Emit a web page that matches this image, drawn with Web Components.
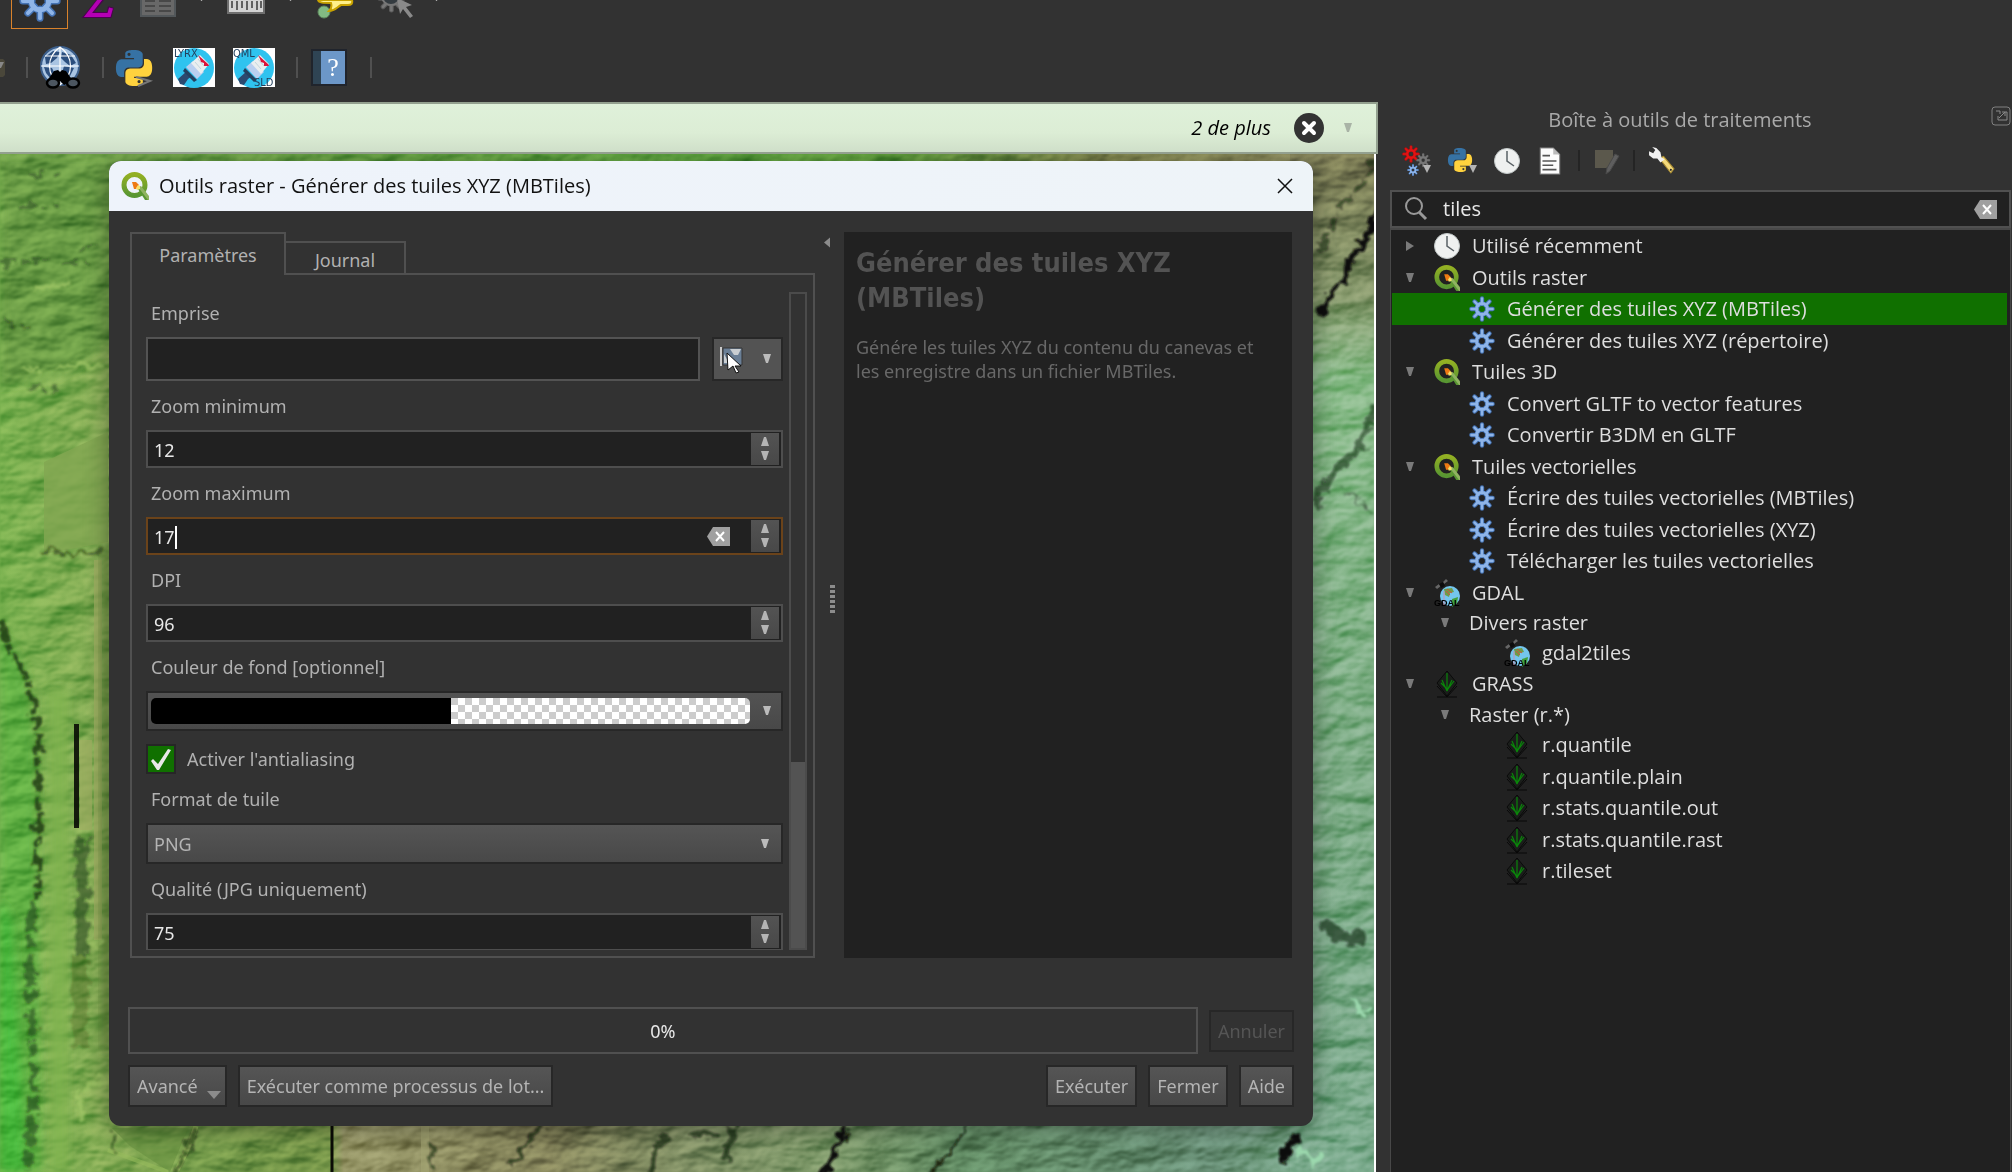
<!DOCTYPE html>
<html lang="fr">
<head>
<meta charset="utf-8">
<meta name="viewport" content="width=device-width, initial-scale=1">
<title>QGIS - Générer des tuiles XYZ (MBTiles)</title>
<style>
  html, body {
    height: 100%;
    margin: 0;
    overflow: hidden;
    background: #323232;
  }
</style>
</head>
<body>
<qgis-app></qgis-app>

<script>
// ---------- icons ----------

// ring with eight rounded teeth
const gear = (light, dark) => {
  const spokes = [0, 45, 90, 135, 180, 225, 270, 315]
    .map((a) => `<path d="M12 7.5V2.2" transform="rotate(${a} 12 12)"/>`)
    .join("");
  return `
    <g fill="none" stroke-linecap="round">
      <g stroke="${dark}" stroke-width="4">${spokes}<circle cx="12" cy="12" r="5"/></g>
      <g stroke="${light}" stroke-width="2.2">${spokes}<circle cx="12" cy="12" r="5" stroke-width="2.8"/></g>
    </g>`;
};

const python = `
  <path fill="#3672a4" d="M14.25.18l.9.2.73.26.59.3.45.32.34.34.25.34.16.33.1.3.04.26.02.2-.01.13V8.5l-.05.63-.13.55-.21.46-.26.38-.3.31-.33.25-.35.19-.35.14-.33.1-.3.07-.26.04-.21.02H8.77l-.69.05-.59.14-.5.22-.41.27-.33.32-.27.35-.2.36-.15.37-.1.35-.07.32-.04.27-.02.21v3.06H3.17l-.21-.03-.28-.07-.32-.12-.35-.18-.36-.26-.36-.36-.35-.46-.32-.59-.28-.73-.21-.88-.14-1.05-.05-1.23.06-1.22.16-1.04.24-.87.32-.71.36-.57.4-.44.42-.33.42-.24.4-.16.36-.1.32-.05.24-.01h.16l.06.01h8.16v-.83H6.18l-.01-2.75-.02-.37.05-.34.11-.31.17-.28.25-.26.31-.23.38-.2.44-.18.51-.15.58-.12.64-.1.71-.06.77-.04.84-.02 1.27.05zm-6.3 1.98l-.23.33-.08.41.08.41.23.34.33.22.41.09.41-.09.33-.22.23-.34.08-.41-.08-.41-.23-.33-.33-.22-.41-.09-.41.09z"/>
  <path fill="#ffd23e" d="M21.1 6.11l.28.06.32.12.35.18.36.27.36.35.35.47.32.59.28.73.21.88.14 1.04.05 1.23-.06 1.23-.16 1.04-.24.86-.32.71-.36.57-.4.45-.42.33-.42.24-.4.16-.36.09-.32.05-.24.02-.16-.01h-8.22v.82h5.84l.01 2.76.02.36-.05.34-.11.31-.17.29-.25.25-.31.24-.38.2-.44.17-.51.15-.58.13-.64.09-.71.07-.77.04-.84.01-1.27-.04-1.07-.14-.9-.2-.73-.25-.59-.3-.45-.33-.34-.34-.25-.34-.16-.33-.1-.3-.04-.25-.02-.2.01-.13v-5.34l.05-.64.13-.54.21-.46.26-.38.3-.32.33-.24.35-.2.35-.14.33-.1.3-.06.26-.04.21-.02.13-.01h5.84l.69-.05.59-.14.5-.21.41-.28.33-.32.27-.35.2-.36.15-.36.1-.35.07-.32.04-.28.02-.21V6.07h2.09l.14.01zm-6.47 14.25l-.23.33-.08.41.08.41.23.33.33.23.41.08.41-.08.33-.23.23-.33.08-.41-.08-.41-.23-.33-.33-.23-.41-.08-.41.08z"/>`;

const brush = `
  <rect width="42" height="39" fill="#fff"/>
  <circle cx="21" cy="20" r="20" fill="#2fc3ef"/>
  <path d="M5 31l9-8 5 5-4 3-4 6-4-1z" fill="#2b4a70"/>
  <path d="M12 20l12 12-3 2L10 23z" fill="#24405f"/>
  <path d="M13 19l7-6 11 11-7 7z" fill="#b9cff0"/>
  <path d="M18 15l9-8 9 9-8 10z" fill="#e9eef0"/>
  <path d="M22 14l6 7M25 11l6 7" stroke="#c3d6dc"/>
  <path d="M25 7l10 9 1 2-5 0 0-3-3-1-1-3z" fill="#dc143c"/>`;

const label = (x, y, text) =>
  `<text x="${x}" y="${y}" font-family="DejaVu Sans Condensed, sans-serif" font-size="11" fill="#23405e">${text}</text>`;

const ICONS = {
  gear: ["0 0 24 24", gear("#8fb5e8", "#4573b4")],
  sigma: ["0 0 30 50", `<path d="M2 0h25v8M20 18L3 39h21l2-8" fill="none" stroke="#4b0050" stroke-width="6"/><path d="M20 17L3 39h21l2-7" fill="none" stroke="#b400b4" stroke-width="4"/>`],
  table: ["0 0 50 50", `<path d="M9 0h34v40H9z" fill="#686868" stroke="#52575a" stroke-width="2"/><path d="M13 25h10M27 25h12M13 30h10M27 30h12M13 35h10M27 35h12" stroke="#484848" stroke-width="2"/>`],
  ruler: ["0 0 50 50", `<path d="M7 0h36v37H7z" fill="#d3d3d3" stroke="#6f6f6f" stroke-width="2"/><path d="M11 25v7M16 25v9M21 25v7M26 25v9M31 25v7M36 25v9M40 25v7" stroke="#606060" stroke-width="2"/>`],
  callout: ["0 0 50 50", `<circle cx="14" cy="36" r="6" fill="#83ba83" stroke="#5f8a60"/><path d="M8 24h34c1 4-1 5-4 5h-7c-4 2-6 6-12 6 3-3 3-5 2-8-8 0-12 0-13-3z" fill="#fff08a" stroke="#c8a200" stroke-width="2"/>`],
  gearCursor: ["0 0 40 50", `<g transform="translate(0 8) scale(1.2)">${gear("#777", "#5a5a5a")}</g><circle cx="14" cy="20" r="9" fill="#343b40" stroke="#777" stroke-width="2"/><path d="M20 22l15 7-6 2 7 9-3 2-7-9-3 5z" fill="#8a8a8a"/>`],
  stub: ["0 0 5 18", `<path d="M0 0h3l2 2v14l-2 2H0z" fill="#4a473a"/><path d="M0 3h4L1 9H0z" fill="#888"/>`],
  globe: ["0 0 42 42", `
    <circle cx="21" cy="19" r="19" fill="#a9c4e2" stroke="#3c5f8c" stroke-width="2"/>
    <path d="M6 10l8-6 7 1-3 6-6 5-5 1zM23 5l9 3 5 8-6 3-5-4-4-4zM5 20l8 1 3 6-4 5-5-6zM25 19l10 2-4 8-8-3z" fill="#2c4f7e"/>
    <path d="M2 19h38M6 9h30M21 0v38M21 0c-14 10-14 28 0 38M21 0c14 10 14 28 0 38" fill="none" stroke="#fff" stroke-width="1.2"/>
    <path d="M8 34l7-10 4-1 2 2 2-2 4 1 7 10-9 4-4-4-4 4z" fill="#000"/>
    <ellipse cx="14" cy="36" rx="6" ry="4.500" fill="#4c5660" stroke="#000" stroke-width="2.500"/>
    <ellipse cx="34" cy="36" rx="6" ry="4.500" fill="#4c5660" stroke="#000" stroke-width="2.500"/>`],
  pythonConsole: ["0 0 40 40", `<g transform="translate(1 2) scale(1.5)">${python}</g><path d="M21 29l14 4-12 5" fill="none" stroke="#777" stroke-width="2"/>`],
  lyrx: ["0 0 42 39", brush + label(1, 9, "LYRX")],
  qmlSld: ["0 0 42 39", brush + label(0, 9, "QML") + label(21, 38, "SLD")],
  book: ["0 0 36 37", `<path d="M1 1h34v35H1z" fill="#6c97c8" stroke="#20242c" stroke-width="2"/><path d="M2 2h8v33H2z" fill="#2f4454"/><text x="22" y="27" text-anchor="middle" font-family="Liberation Serif, serif" font-size="26" fill="#fff">?</text>`],
  closeRound: ["0 0 30 30", `<circle cx="15" cy="15" r="15" fill="#333"/><path d="M10 10l10 10M20 10L10 20" stroke="#fff" stroke-width="4" stroke-linecap="round"/>`],
  gears: ["0 0 31 31", `<g transform="scale(.75)">${gear("#e01515", "#b80d0d")}<circle cx="12" cy="12" r="3" fill="#323232"/></g><g transform="translate(14 8) scale(.6)">${gear("#777", "#5c5c5c")}</g><g transform="translate(5 19) scale(.5)">${gear("#8fb5e8", "#4573b4")}</g><path d="M21 20h8l-4 8z" fill="#b4b4b4"/>`],
  pythonMenu: ["0 0 33 31", `<g transform="translate(2 3)">${python}</g><path d="M23 20h8l-4 8z" fill="#b4b4b4"/>`],
  clock: ["0 0 26 26", `<circle cx="13" cy="13" r="12.500" fill="#eff1f0" stroke="#c2c8c8"/><path d="M13 3v10l7 5" fill="none" stroke="#5a6266" stroke-width="1.500"/>`],
  doc: ["0 0 26 26", `<path d="M4 1h12l6 6v18H4z" fill="#fcfcfc" stroke="#888"/><path d="M16 1v6h6z" fill="#bbb"/><path d="M6 8h7M6 13h13M6 17h10M6 21h13" stroke="#555" stroke-width="1.500"/>`],
  edit: ["0 0 27 26", `<path d="M2 2h18v15L13 20H2z" fill="#5b584c"/><path d="M22 6l4 2-9 15-4 3 1-6z" fill="#5e5e5e" stroke="#494949"/>`],
  wrench: ["0 0 26 26", `<path d="M11 11l4-2 10 12-3 4z" fill="#f4da7c" stroke="#a98c32"/><path d="M4 0l4 1 4 4 1 5 3 2-4 3-3-4-4 0-4-3 0-4 4 2 2-3z" fill="#f0f0f0"/><circle cx="22" cy="22" r="1" fill="#222"/>`],
  search: ["0 0 24 24", `<circle cx="10" cy="9" r="8" fill="none" stroke="#999" stroke-width="2"/><path d="M15 15l7 7" stroke="#999" stroke-width="3"/>`],
  clear: ["0 0 23 19", `<path d="M0 9.500L6 0h17v19H6z" fill="#a0a0a0"/><path d="M9 5l8 9M17 5l-8 9" stroke="#fff" stroke-width="2"/>`],
  float: ["0 0 20 20", `<rect x="1" y="1" width="18" height="18" rx="3" fill="none" stroke="#808080"/><path d="M5 5h4v3M14 6h2v8h-9v-4M8 12l6-6M11 6h3v4" fill="none" stroke="#8a8a8a"/>`],
  qgis: ["0 0 28 28", `
    <defs><linearGradient id="q" x1="0" y1="0" x2="0" y2="1"><stop offset="0" stop-color="#93b023"/><stop offset="1" stop-color="#589632"/></linearGradient></defs>
    <circle cx="13.500" cy="13" r="10.500" fill="none" stroke="url(#q)" stroke-width="5"/>
    <path d="M17 17l4-2 6 9v4h-3z" fill="#589632"/>
    <path d="M17 15l3-1 8 10v4h-1z" fill="#8fb361"/>
    <path d="M11 10h4l3 3-3 4h-2z" fill="#ee7913"/><path d="M17 13l2 1 0 3-3 1-1-2z" fill="#f8e06a"/>`],
  gdal: ["0 0 26 28", `
    <path d="M1 8l4-3 2 2-4 3zM9 3l3-3 2 2-4 3z" fill="#666"/><path d="M5 5l4-2 2 4-4 2z" fill="#0c0c0c"/>
    <circle cx="16" cy="17" r="10" fill="#74c6ee"/>
    <path d="M10 10l8-1 2 4-4 1-1 4-4-2z" fill="#6f9c4a"/><path d="M12 12l4 4M13 10l5 4" stroke="#d34e3a"/>
    <path d="M18 20l6-2-1 6-5 4z" fill="#3f9f3c"/><path d="M10 12v15" stroke="#c78fae"/>
    <text x="0" y="27" font-family="Liberation Sans, sans-serif" font-weight="700" font-size="9" fill="#000">GDAL</text>`],
  grass: ["0 0 26 28", `
    <path d="M13 1l10 12-10 13L3 13z" fill="#1a1d1a" stroke="#0a0a0a"/><path d="M3 16l10 11 10-11M3 27h20" fill="none" stroke="#080808"/>
    <path d="M13 21V3M13 21L8 10M13 21l5-11M12 18l-5-5M14 19l6-8" fill="none" stroke="#0a860a" stroke-width="1.200"/>`],
  extent: ["0 0 24 28", `<path d="M1 2v19" stroke="#ccc" stroke-width="2"/><path d="M3 3h19v17H3z" fill="#6a7f96" stroke="#343434"/><path d="M10 4h11l-3 6h-4zM4 9l5 9H4z" fill="#c9ced2"/><path d="M7 8l14 13-6 0 4 6-3 1-3-7-5 4z" fill="#fff" stroke="#111"/>`],
  close: ["0 0 16 16", `<path d="M1 1l14 14M15 1L1 15" stroke="#111" stroke-width="1.500"/>`],
  down: ["0 0 10 10", `<path d="M1 0h8L6 9H4z" fill="currentColor"/>`],
  up: ["0 0 10 10", `<path d="M1 9h8L6 0H4z" fill="currentColor"/>`],
  right: ["0 0 10 10", `<path d="M1 0v10l8-5z" fill="currentColor"/>`],
  left: ["0 0 10 10", `<path d="M8 0v10L2 5z" fill="currentColor"/>`],
  menu: ["0 0 14 8", `<path d="M0 0h14L7 8z" fill="currentColor"/>`],
};

const icon = (name, width, height = width) =>
  `<svg width="${width}" height="${height}" viewBox="${ICONS[name][0]}" aria-hidden="true">${ICONS[name][1]}</svg>`;

// rules that every shadow root starts with
const base = `
  *, *::before, *::after { box-sizing: border-box; }
  svg { display: block; flex: none; overflow: visible; }
  button, input, select { margin: 0; font: inherit; color: inherit; border-radius: 0; outline: none; }
  .tool { padding: 0; border: 0; background: none; }
`;

class BaseElement extends HTMLElement {
  connectedCallback() {
    if (this.shadowRoot) return;
    this.attachShadow({ mode: "open" });
    this.shadowRoot.innerHTML = `<style>${base}</style>${this.template()}`;
  }
}

// ---------- main tool bars ----------

class MainToolbar extends BaseElement {
  template() {
    const tool = (name, title, w, h = w) => `<button class="tool" type="button" aria-label="${title}">${icon(name, w, h)}</button>`;
    return `
      <style>
        :host { display: flex; flex-direction: column; justify-content: flex-end; height: 102px; overflow: hidden; color: #8c8c8c; }
        .row { display: flex; align-items: center; flex: none; }
        .first { height: 57px; gap: 17px; padding-left: 11px; align-items: flex-start; }
        .first .tool { margin-top: 4px; }
        .first .menu { padding-top: 22px; color: #aaa; width: 5px; }
        .first .active { display: grid; place-items: center; width: 57px; height: 57px; margin: 0; border: 1px solid #d9822b; background: #2d2d2d; }
        .second { height: 73px; padding-top: 4px; }
        .second .tool + .tool { margin-left: 18px; }
        .sep { width: 2px; height: 21px; margin: 0 11px 0 21px; background: #505050; }
      </style>
      <div class="row first">
        <button class="tool active" type="button" aria-label="Boîte à outils">${icon("gear", 42)}</button>
        ${tool("sigma", "Statistiques", 30, 50)}
        ${tool("table", "Table d'attributs", 50)}
        <span class="menu">${icon("down", 5, 10)}</span>
        ${tool("ruler", "Mesurer", 50)}
        <span class="menu">${icon("down", 5, 10)}</span>
        ${tool("callout", "Annotation", 50)}
        ${tool("gearCursor", "Actions", 40, 50)}
        <span class="menu">${icon("down", 5, 10)}</span>
      </div>
      <div class="row second">
        ${icon("stub", 5, 18)}
        <span class="sep"></span>
        ${tool("globe", "MetaSearch", 42)}
        <span class="sep"></span>
        ${tool("pythonConsole", "Console Python", 40)}
        ${tool("lyrx", "LYRX", 42, 39)}
        ${tool("qmlSld", "QML SLD", 42, 39)}
        <span class="sep"></span>
        ${tool("book", "Aide", 40, 37)}
        <span class="sep"></span>
      </div>`;
  }
}
customElements.define("main-toolbar", MainToolbar);

class MessageBar extends BaseElement {
  template() {
    return `
      <style>
        :host {
          display: flex; align-items: center; justify-content: flex-end;
          height: 52px; box-sizing: border-box; padding-right: 23px;
          border: solid #93a08f; border-width: 2px 2px 2px 0;
          background: linear-gradient(#dff1da, #dcedd5 60%, #cfdfc9);
          font: italic 20px/24px "Open Sans", sans-serif; color: #000;
        }
        .tool { margin: 0 19px 0 23px; }
        .menu { color: #a9b3a6; }
      </style>
      <slot></slot>
      <button class="tool" type="button" aria-label="Fermer">${icon("closeRound", 30)}</button>
      <span class="menu">${icon("down", 10)}</span>`;
  }
}
customElements.define("message-bar", MessageBar);

// ---------- hillshade map ----------

class MapCanvas extends BaseElement {
  template() {
    return `
      <style>
        :host { display: block; position: relative; overflow: hidden; min-height: 0; border-right: 2px solid #fff; margin-right: 2px; background: #79a862; }
        svg { width: 100%; height: 100%; }
        .shade { mix-blend-mode: overlay; }
      </style>
      <svg viewBox="0 154 1374 1018" preserveAspectRatio="none" aria-hidden="true">
        <defs>
          <linearGradient id="base">
            <stop offset="0" stop-color="#75ae4c"/><stop offset=".08" stop-color="#84ab54"/>
            <stop offset=".14" stop-color="#749b4a"/>
            <stop offset=".24" stop-color="#78984a"/><stop offset=".25" stop-color="#979767"/>
            <stop offset=".4" stop-color="#84835a"/><stop offset=".5" stop-color="#7d8d62"/>
            <stop offset=".6" stop-color="#7c9868"/><stop offset=".7" stop-color="#628c64"/>
            <stop offset=".88" stop-color="#688f76"/><stop offset="1" stop-color="#7fb490"/>
          </linearGradient>
          <linearGradient id="top"><stop offset="0" stop-color="#72a44a"/><stop offset=".5" stop-color="#5fa840"/><stop offset=".65" stop-color="#62a33e"/><stop offset=".8" stop-color="#848a50"/><stop offset="1" stop-color="#8c8860"/></linearGradient>
          <linearGradient id="right" x1="0" y1="0" x2="0" y2="1"><stop offset="0" stop-color="#7c7b54"/><stop offset=".14" stop-color="#84976a"/><stop offset=".22" stop-color="#86ba86"/><stop offset=".6" stop-color="#7bab84"/><stop offset="1" stop-color="#79a98b"/></linearGradient>
          <filter id="fine" x="0" y="0" width="100%" height="100%" color-interpolation-filters="sRGB">
            <feTurbulence type="fractalNoise" baseFrequency=".02 .045" numOctaves="4" seed="7"/>
            <feColorMatrix values="0 0 0 0 0  0 0 0 0 0  0 0 0 0 0  1 0 0 0 0"/>
            <feDiffuseLighting surfaceScale="7" diffuseConstant=".72" lighting-color="#fff"><feDistantLight azimuth="225" elevation="45"/></feDiffuseLighting>
            <feGaussianBlur stdDeviation=".8"/>
          </filter>
          <filter id="rough" x="-20%" y="-20%" width="140%" height="140%">
            <feTurbulence type="fractalNoise" baseFrequency=".09" numOctaves="3" seed="3"/>
            <feDisplacementMap in="SourceGraphic" scale="18" xChannelSelector="R" yChannelSelector="G"/>
            <feGaussianBlur stdDeviation=".9"/>
          </filter>
          <filter id="soft" x="-50%" y="-50%" width="200%" height="200%"><feGaussianBlur stdDeviation="5"/></filter>
        </defs>
        <rect y="154" width="1374" height="1018" fill="url(#base)"/>
        <rect y="140" width="1374" height="30" fill="url(#top)"/>
        <rect x="1290" y="154" width="84" height="1018" fill="url(#right)"/>
        <path d="M0 154h115v190L60 375 0 385z" fill="#6b9c45" filter="url(#soft)"/>
        <path d="M0 630l24 40 12 80 2 200 4 222H0z" fill="#5fae43" filter="url(#soft)"/>
        <path d="M0 900l12 20 14 252H0z" fill="#4ab93e" filter="url(#soft)"/>
        <rect class="shade" y="154" width="1374" height="1018" filter="url(#fine)" opacity=".6"/>
        <path d="M44 462l64-30v110l-64 12z" fill="#82a651" opacity=".8"/>
        <path d="M48 690h20v482H50z" fill="#80b450" opacity=".8" filter="url(#soft)"/>
        <path d="M80 740h12v90H80zM94 560h8v380h-8z" fill="#a0ae62" opacity=".7"/>
        <path d="M102 550h7v500h-7z" fill="#5f8338" opacity=".8" filter="url(#soft)"/>
        <g fill="none" stroke="#1c3310" filter="url(#rough)">
          <path d="M0 620l12 35 16 25 9 40 2 70 -2 110" stroke-width="6" opacity=".8" stroke-dasharray="22 4 9 5"/>
          <path d="M32 900l-2 60 3 110-4 102" stroke-width="9" opacity=".5" stroke-dasharray="30 6 12 6"/>
          <path d="M0 262h50M20 205h40M64 262h30M0 322l30 4M30 388h30M30 175h30M82 248h22" stroke-width="4" opacity=".45" stroke-dasharray="14 8 6 5"/>
          <path d="M42 553h62" stroke-width="3" opacity=".6"/>
          <path d="M82 836v120" stroke-width="12" opacity=".5"/>
          <path d="M80 956v90" stroke-width="16" opacity=".25"/>
        </g>
        <g fill="none" stroke="#a4c968" filter="url(#rough)">
          <path d="M36 288l34-6M60 366h46M20 370h20M88 945h12M84 1090l20-12M80 1120v-30" stroke-width="5" opacity=".7"/>
        </g>
        <path d="M74 724h5v104h-5z" fill="#080b04" opacity=".9"/>
        <path d="M112 1128h76l-18 44-40-26z" fill="#628b3c" opacity=".5"/>
        <path d="M332 1126v46" stroke="#0b0c06" stroke-width="3"/>
        <path d="M196 1126c-6 20-12 30-20 46" stroke="#97bb5c" stroke-width="5" fill="none" opacity=".8"/>
        <path d="M108 1150l60 22" stroke="#97bb5c" stroke-width="4" opacity=".6"/>
        <path d="M425 1126v46" stroke="#a3a673" stroke-width="8" opacity=".6"/>
        <g fill="none" stroke="#0a0e08" filter="url(#rough)">
          <path d="M115 1130v20M195 1126l-10 30-10 20M432 1145v27" stroke-width="4" opacity=".5"/>
          <path d="M540 1126l-20 30-12 8" stroke-width="5" opacity=".6"/>
          <path d="M652 1172l2-22 16-14M690 1134h25M725 1160l8-34" stroke-width="7" opacity=".6"/>
          <path d="M846 1126l-12 30-14 22" stroke-width="6"/>
          <path d="M966 1126l-14 26-22 24" stroke-width="4" opacity=".8"/>
          <path d="M1284 1164l4-20 14-6" stroke-width="8"/>
          <path d="M1376 210l-10 30-16 18-4 22-18 16-8 20" stroke-width="7"/>
          <path d="M1320 250l22-46 20-20 14-24" stroke-width="6" opacity=".5" stroke-dasharray="16 6"/>
          <path d="M1376 405l-20 46-34 36-6 20" stroke-width="8" opacity=".5"/>
          <path d="M1322 920l12 14 30 6" stroke-width="12" opacity=".55"/>
          <path d="M1345 490l22 18 7 4" stroke-width="2" opacity=".4"/>
        </g>
        <path d="M1298 1150l14 12 12-8M1352 1000l14 14" fill="none" stroke="#9bd8ad" stroke-width="6" filter="url(#rough)"/>
      </svg>
      <slot></slot>`;
  }
}
customElements.define("map-canvas", MapCanvas);

// ---------- form parts ----------

class PushButton extends BaseElement {
  template() {
    const off = this.hasAttribute("disabled") ? "disabled" : "";
    const menu = this.hasAttribute("menu") ? `<span class="menu">${icon("menu", 14, 8)}</span>` : "";
    return `
      <style>
        :host { display: block; }
        button {
          display: flex; height: 42px; padding: 0 7px; align-items: center; white-space: nowrap;
          border: 2px solid #272727; background: linear-gradient(#555, #484848); color: #b4b4b4;
        }
        button:disabled { background: #323232; color: #555; }
        .menu { align-self: flex-end; margin: 0 -3px 6px 9px; color: #8c8c8c; }
      </style>
      <button type="button" ${off}><slot></slot>${menu}</button>`;
  }
}
customElements.define("push-button", PushButton);

const fieldStyle = `
  :host { display: flex; flex-direction: column; gap: 12px; }
  label { padding-left: 5px; line-height: 24px; }
`;

class SpinField extends BaseElement {
  template() {
    const active = this.hasAttribute("active");
    return `
      <style>
        ${fieldStyle}
        .box { position: relative; display: flex; align-items: center; height: 38px; padding: 2px; border: 2px solid #4e4e4e; background: #212121; color: #e8e8e8; }
        .box.active { border-color: #6b431a; }
        input { flex: 1; min-width: 0; height: 30px; padding: 2px 4px 0; border: 0; background: none; appearance: textfield; -moz-appearance: textfield; }
        input::-webkit-inner-spin-button { display: none; }
        .caret { position: absolute; left: 27px; top: 7px; width: 2px; height: 23px; background: #fff; }
        .clear { margin-right: 21px; }
        .steps { display: flex; flex-direction: column; justify-content: center; align-items: center; gap: 4px; width: 28px; height: 32px; background: linear-gradient(#535353, #484848); color: #b4b4b4; }
      </style>
      <label for="value">${this.getAttribute("label")}</label>
      <div class="box ${active ? "active" : ""}">
        <input id="value" type="number" value="${this.getAttribute("value")}">
        ${active ? `<span class="caret"></span><button class="tool clear" type="button" aria-label="Effacer">${icon("clear", 23, 19)}</button>` : ""}
        <span class="steps">
          <button class="tool" type="button" aria-label="Plus">${icon("up", 10)}</button>
          <button class="tool" type="button" aria-label="Moins">${icon("down", 10)}</button>
        </span>
      </div>`;
  }
}
customElements.define("spin-field", SpinField);

class ExtentField extends BaseElement {
  template() {
    return `
      <style>
        ${fieldStyle}
        .row { display: flex; gap: 12px; }
        input { flex: 1; min-width: 0; height: 44px; border: 2px solid #535353; background: #212121; padding: 0 6px; }
        button { display: flex; align-items: center; justify-content: space-between; width: 71px; height: 44px; padding: 0 9px 0 6px; border: 2px solid #272727; background: #535353; color: #bbb; }
      </style>
      <label for="extent">Emprise</label>
      <div class="row">
        <input id="extent" type="text">
        <button type="button" aria-label="Choisir l'emprise">${icon("extent", 24, 28)}${icon("down", 10)}</button>
      </div>`;
  }
}
customElements.define("extent-field", ExtentField);

class ColorField extends BaseElement {
  template() {
    return `
      <style>
        ${fieldStyle}
        button { display: flex; align-items: center; width: 100%; height: 40px; padding: 0 9px 0 3px; gap: 12px; border: 2px solid #272727; background: linear-gradient(#535353, #484848); color: #bbb; }
        .swatch { display: grid; grid-template-columns: 1fr 1fr; flex: 1; height: 26px; border-radius: 5px; overflow: hidden; }
        .solid { background: #000; }
        .alpha { background: repeating-conic-gradient(#fff 0 25%, #ccc 0 50%) 0 0 / 14px 14px; }
      </style>
      <label for="color">Couleur de fond [optionnel]</label>
      <button id="color" type="button"><span class="swatch"><span class="solid"></span><span class="alpha"></span></span>${icon("down", 10)}</button>`;
  }
}
customElements.define("color-field", ColorField);

class CheckField extends BaseElement {
  template() {
    return `
      <style>
        :host { display: block; }
        label { display: flex; align-items: center; gap: 11px; height: 30px; }
        input {
          appearance: none; width: 30px; height: 30px; border: 2px solid #262626;
          background: #333;
        }
        input:checked { background: #107000 url("data:image/svg+xml,%3Csvg xmlns='http://www.w3.org/2000/svg' viewBox='0 0 26 26'%3E%3Cpath d='M3 15l2-2 5 5L20 3l3 1-12 20H9z' fill='%23e8e8e8'/%3E%3C/svg%3E"); }
      </style>
      <label><input type="checkbox" checked><slot></slot></label>`;
  }
}
customElements.define("check-field", CheckField);

class SelectField extends BaseElement {
  template() {
    return `
      <style>
        ${fieldStyle}
        .box { display: grid; align-items: center; }
        select, .arrow { grid-area: 1 / 1; }
        select { appearance: none; width: 100%; height: 41px; padding: 0 6px; border: 2px solid #272727; background: linear-gradient(#555, #484848); color: #b4b4b4; }
        .arrow { justify-self: end; margin-right: 13px; color: #bbb; pointer-events: none; }
      </style>
      <label for="format">${this.getAttribute("label")}</label>
      <div class="box">
        <select id="format"><option>PNG</option><option>JPG</option></select>
        <span class="arrow">${icon("down", 10)}</span>
      </div>`;
  }
}
customElements.define("select-field", SelectField);

// ---------- algorithm dialog ----------

class TabbedForm extends BaseElement {
  template() {
    return `
      <style>
        :host { display: flex; flex-direction: column; min-width: 0; min-height: 0; }
        .tabs { display: flex; align-items: flex-end; }
        .tabs button { border: 2px solid #505050; background: #323232; color: #b1b1b1; }
        .tabs .current { position: relative; width: 156px; height: 43px; margin-bottom: -2px; padding: 0; border-bottom: 0; }
        .tabs .other { width: 120px; height: 32px; padding: 4px 0 0; border-left: 0; border-bottom: 0; }
        .pane { flex: 1; min-height: 0; display: grid; grid-template-columns: minmax(0, 1fr) 18px; gap: 6px; padding: 17px 6px 6px 14px; border: 2px solid #505050; }
        .scroll { overflow: hidden; }
        .fields { display: flex; flex-direction: column; gap: 13px; padding-top: 9px; }
        .bar { display: grid; grid-template-rows: 472fr 188fr; border: 2px solid #4b4b4b; }
        .thumb { grid-row: 2; background: #535353; }
      </style>
      <div class="tabs">
        <button class="current" type="button">Paramètres</button>
        <button class="other" type="button">Journal</button>
      </div>
      <div class="pane">
        <div class="scroll"><div class="fields"><slot></slot></div></div>
        <div class="bar"><div class="thumb"></div></div>
      </div>`;
  }
}
customElements.define("tabbed-form", TabbedForm);

class AlgorithmDialog extends BaseElement {
  template() {
    return `
      <style>
        :host {
          position: absolute; inset: 7px 61px 46px 109px;
          display: flex; flex-direction: column; overflow: hidden;
          border-radius: 12px; background: #323232; color: #b1b1b1;
          box-shadow: 0 3px 24px rgba(0, 0, 0, .4);
          font: 18px/24px "Noto Sans", sans-serif;
        }
        header { display: flex; align-items: center; gap: 10px; height: 50px; padding: 0 20px 0 12px; background: linear-gradient(90deg, #eef3fb, #eef4f8); color: #111; font: 20px/24px "Open Sans", sans-serif; }
        header h1 { flex: 1; margin: 0; font: inherit; }
        .body { flex: 1; min-height: 0; display: flex; flex-direction: column; padding: 21px 19px 19px; }
        .top { flex: 1; min-height: 0; display: grid; grid-template-columns: 685fr 29px 448fr; grid-template-rows: minmax(0, 1fr); padding: 0 2px; }
        .split { display: flex; flex-direction: column; align-items: center; justify-content: space-between; padding: 5px 7px 343px 6px; color: #8c8c8c; }
        .split .tool { margin-right: 4px; }
        .grip { width: 5px; height: 30px; margin-left: 6px; background: repeating-linear-gradient(#8c8c8c 0 3px, #323232 3px 5px); }
        .help { padding: 13px 12px; background: #212121; color: #686868; }
        .help h2 { margin: 0 0 20px; font: 700 27px/35px "DejaVu Sans Condensed", sans-serif; color: #535353; }
        .help p { margin: 0; }
        .progress { display: flex; align-items: center; gap: 11px; margin: 49px 0 11px; }
        .meter { flex: 1; display: grid; place-items: center; height: 47px; border: 2px solid #505050; color: #e8e8e8; }
        .actions { display: flex; gap: 11px; }
        .actions .space { flex: 1; }
      </style>
      <header>${icon("qgis", 28)}<h1>Outils raster - Générer des tuiles XYZ (MBTiles)</h1>
        <button class="tool" type="button" aria-label="Fermer la fenêtre">${icon("close", 16)}</button></header>
      <div class="body">
        <div class="top">
          <tabbed-form>
            <extent-field></extent-field>
            <spin-field label="Zoom minimum" value="12"></spin-field>
            <spin-field label="Zoom maximum" value="17" active></spin-field>
            <spin-field label="DPI" value="96"></spin-field>
            <color-field></color-field>
            <check-field>Activer l'antialiasing</check-field>
            <select-field label="Format de tuile"></select-field>
            <spin-field label="Qualité (JPG uniquement)" value="75"></spin-field>
          </tabbed-form>
          <div class="split">
            <button class="tool" type="button" aria-label="Replier l'aide">${icon("left", 10, 11)}</button>
            <span class="grip"></span>
          </div>
          <section class="help">
            <h2>Générer des tuiles XYZ (MBTiles)</h2>
            <p>Génére les tuiles XYZ du contenu du canevas et les enregistre dans un fichier MBTiles.</p>
          </section>
        </div>
        <div class="progress">
          <div class="meter" role="progressbar" aria-valuenow="0">0%</div>
          <push-button disabled>Annuler</push-button>
        </div>
        <div class="actions">
          <push-button menu>Avancé</push-button>
          <push-button>Exécuter comme processus de lot...</push-button>
          <span class="space"></span>
          <push-button>Exécuter</push-button>
          <push-button>Fermer</push-button>
          <push-button>Aide</push-button>
        </div>
      </div>`;
  }
}
customElements.define("algorithm-dialog", AlgorithmDialog);

// ---------- processing toolbox ----------

class TreeRow extends BaseElement {
  template() {
    const name = this.getAttribute("icon");
    const state = this.getAttribute("state");
    const level = Number(this.getAttribute("level") || 0);
    const arrow = state ? icon(state === "open" ? "down" : "right", 10) : "";
    const size = name === "gdal" || name === "grass" ? [26, 28] : [26, 26];
    return `
      <style>
        :host { display: flex; align-items: center; padding-left: ${13 + 35 * level}px; margin: 0 3px 0 1px; white-space: nowrap; }
        :host([selected]) { background: #107000; }
        .arrow { flex: none; width: 29px; color: #7a7a7a; }
        .icon { flex: none; margin-right: 12px; }
      </style>
      <span class="arrow">${arrow}</span>
      ${name ? `<span class="icon">${icon(name, ...size)}</span>` : ""}
      <slot></slot>`;
  }
}
customElements.define("tree-row", TreeRow);

class ToolboxDock extends BaseElement {
  template() {
    const rows = [
      [0, "clock", "closed", "Utilisé récemment"],
      [0, "qgis", "open", "Outils raster"],
      [1, "gear", "", "Générer des tuiles XYZ (MBTiles)"],
      [1, "gear", "", "Générer des tuiles XYZ (répertoire)"],
      [0, "qgis", "open", "Tuiles 3D"],
      [1, "gear", "", "Convert GLTF to vector features"],
      [1, "gear", "", "Convertir B3DM en GLTF"],
      [0, "qgis", "open", "Tuiles vectorielles"],
      [1, "gear", "", "Écrire des tuiles vectorielles (MBTiles)"],
      [1, "gear", "", "Écrire des tuiles vectorielles (XYZ)"],
      [1, "gear", "", "Télécharger les tuiles vectorielles"],
      [0, "gdal", "open", "GDAL"],
      [1, "", "open", "Divers raster"],
      [2, "gdal", "", "gdal2tiles"],
      [0, "grass", "open", "GRASS"],
      [1, "", "open", "Raster (r.*)"],
      [2, "grass", "", "r.quantile"],
      [2, "grass", "", "r.quantile.plain"],
      [2, "grass", "", "r.stats.quantile.out"],
      [2, "grass", "", "r.stats.quantile.rast"],
      [2, "grass", "", "r.tileset"],
    ];
    const tool = (name, title, w, h = w) => `<button class="tool" type="button" aria-label="${title}">${icon(name, w, h)}</button>`;
    return `
      <style>
        :host { display: flex; flex-direction: column; min-height: 0; padding: 0 1px 0 12px; color: #dedede; font: 20px/24px "Open Sans", sans-serif; }
        header { display: flex; align-items: center; height: 35px; color: #a9a9a9; }
        header h2 { flex: 1; margin: 0; font: inherit; text-align: center; }
        header .tool { margin: -7px 0 0 21px; }
        .tools { display: flex; align-items: center; gap: 13px; height: 53px; padding: 0 0 6px 12px; }
        .sep { width: 2px; height: 21px; background: #242424; }
        .search { display: flex; align-items: center; gap: 15px; height: 38px; padding: 0 12px 0 12px; border: 2px solid #505050; background: #212121; }
        .search input { flex: 1; min-width: 0; padding: 0; border: 0; background: none; color: #e8e8e8; }
        .tree { flex: 1; min-height: 0; overflow: hidden; margin-top: 0; border: solid #484848; border-width: 2px 1px 0 1px; background: #212121; }
        tree-row { height: 32px; }
        tree-row:nth-child(even) { height: 31px; }
        tree-row:not([icon]) { height: 29px; }
      </style>
      <header><h2>Boîte à outils de traitements</h2>${tool("float", "Détacher", 20)}</header>
      <div class="tools">
        ${tool("gears", "Modèles", 31)}
        ${tool("pythonMenu", "Scripts", 33, 31)}
        ${tool("clock", "Historique", 30, 26)}
        ${tool("doc", "Résultats", 30, 28)}
        <span class="sep"></span>
        ${tool("edit", "Éditer", 27, 26)}
        <span class="sep"></span>
        ${tool("wrench", "Options", 27)}
      </div>
      <div class="search">
        ${icon("search", 24)}
        <input type="text" value="tiles" aria-label="Rechercher">
        <button class="tool" type="button" aria-label="Effacer">${icon("clear", 23, 19)}</button>
      </div>
      <div class="tree">${rows.map(([level, name, state, text], i) => `<tree-row level="${level}" ${name ? `icon="${name}"` : ""} ${state ? `state="${state}"` : ""} ${i === 2 ? "selected" : ""}>${text}</tree-row>`).join("")}</div>`;
  }
}
customElements.define("toolbox-dock", ToolboxDock);

class QgisApp extends BaseElement {
  template() {
    return `
      <style>
        :host { display: grid; grid-template: auto minmax(0, 1fr) / minmax(0, 1fr) 634px; height: 100vh; background: #323232; }
        main-toolbar { grid-column: 1 / -1; }
        main { display: grid; grid-template-rows: auto minmax(0, 1fr); min-height: 0; }
      </style>
      <main-toolbar></main-toolbar>
      <main>
        <message-bar>2 de plus</message-bar>
        <map-canvas><algorithm-dialog></algorithm-dialog></map-canvas>
      </main>
      <toolbox-dock></toolbox-dock>`;
  }
}
customElements.define("qgis-app", QgisApp);
</script>
</body>
</html>
